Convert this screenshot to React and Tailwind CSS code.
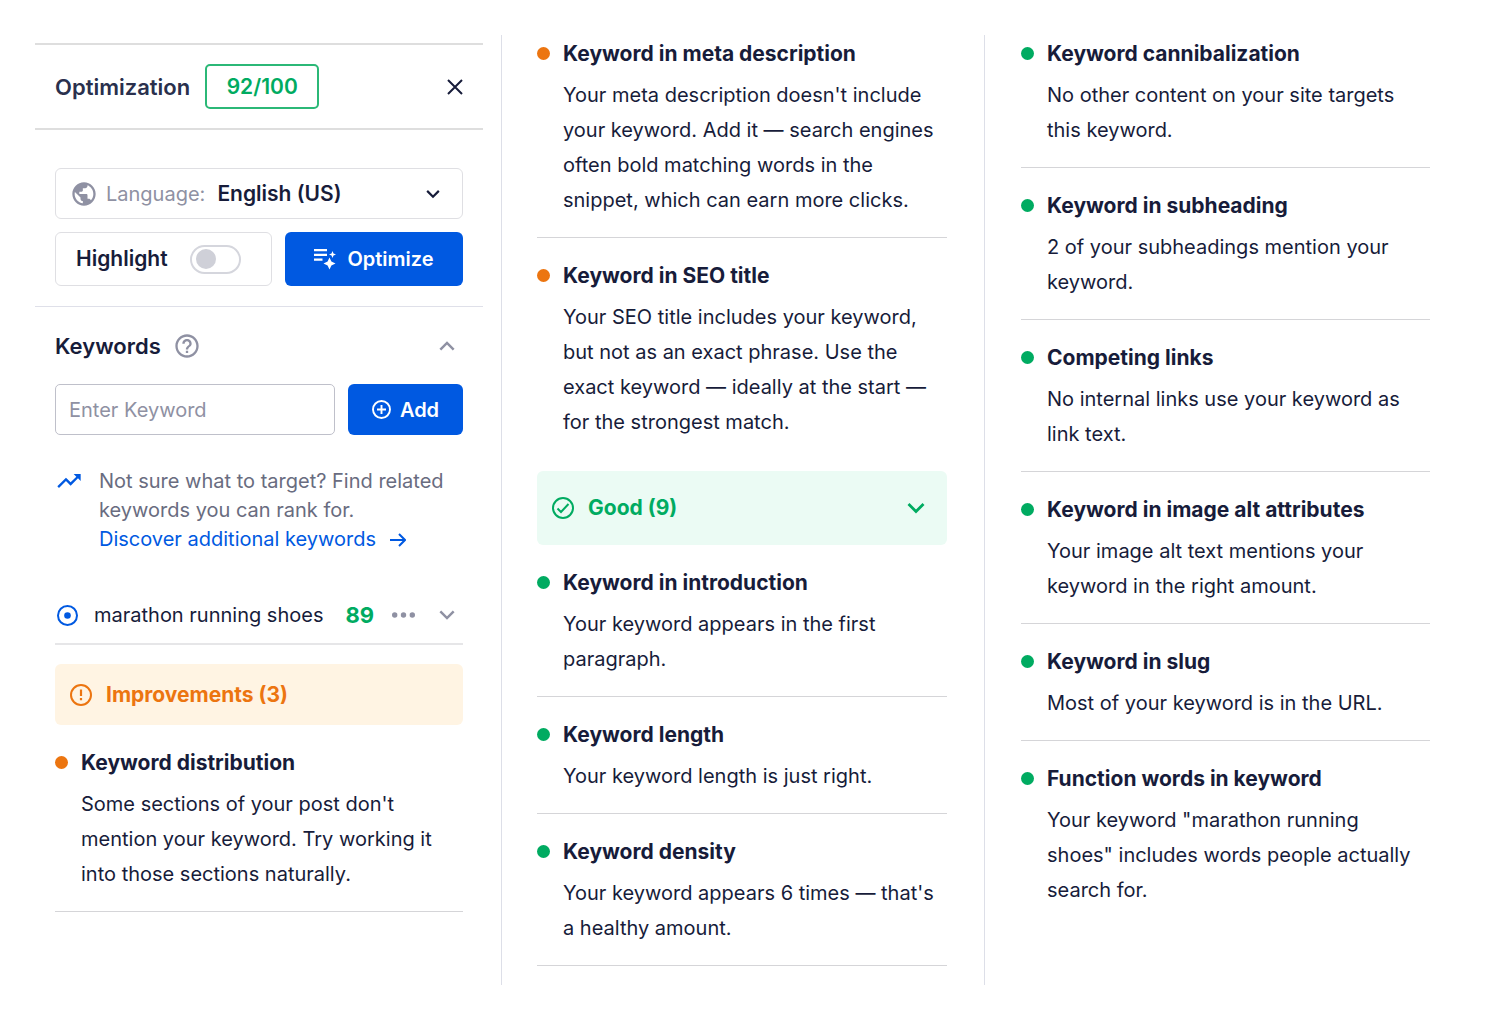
import { useState } from "react";
import { MdPublic, MdHelpOutline, MdTrendingUp } from "react-icons/md";

const improvements = [
  {
    title: "Keyword distribution",
    text: "Some sections of your post don't mention your keyword. Try working it into those sections naturally.",
  },
  {
    title: "Keyword in meta description",
    text: "Your meta description doesn't include your keyword. Add it — search engines often bold matching words in the snippet, which can earn more clicks.",
  },
  {
    title: "Keyword in SEO title",
    text: "Your SEO title includes your keyword, but not as an exact phrase. Use the exact keyword — ideally at the start — for the strongest match.",
  },
];

const good = [
  {
    title: "Keyword in introduction",
    text: "Your keyword appears in the first paragraph.",
  },
  { title: "Keyword length", text: "Your keyword length is just right." },
  {
    title: "Keyword density",
    text: "Your keyword appears 6 times — that's a healthy amount.",
  },
  {
    title: "Keyword cannibalization",
    text: "No other content on your site targets this keyword.",
  },
  {
    title: "Keyword in subheading",
    text: "2 of your subheadings mention your keyword.",
  },
  {
    title: "Competing links",
    text: "No internal links use your keyword as link text.",
  },
  {
    title: "Keyword in image alt attributes",
    text: "Your image alt text mentions your keyword in the right amount.",
  },
  { title: "Keyword in slug", text: "Most of your keyword is in the URL." },
  {
    title: "Function words in keyword",
    text: 'Your keyword "marathon running shoes" includes words people actually search for.',
  },
];

function Chevron({ up, className }) {
  return (
    <svg
      viewBox="0 0 18 18"
      fill="none"
      stroke="currentColor"
      strokeWidth="2.8"
      className={className}
      aria-hidden="true"
    >
      <path d={up ? "M1.500 13l7.500-7.500 7.500 7.500" : "M1.500 5l7.500 7.500 7.500-7.500"} />
    </svg>
  );
}

function CheckItem({ item, tone = "good", first, last }) {
  return (
    <li
      className={`flex gap-[13px] border-[#d5d5d8] ${first ? "pt-[5px]" : "pt-6"} ${
        last ? "" : "border-b pb-[19px]"
      }`}
    >
      <span
        className={`mt-[7px] h-[13px] w-[13px] shrink-0 rounded-full ${
          tone === "good" ? "bg-[#00ab61]" : "bg-[#ec7510]"
        }`}
      />
      <div>
        <h3 className="text-[21px] leading-7 font-bold">{item.title}</h3>
        <p className="mt-[10px] text-[20px] leading-[35px]">{item.text}</p>
      </div>
    </li>
  );
}

export default function App() {
  const [highlight, setHighlight] = useState(false);
  const [keyword, setKeyword] = useState("");

  return (
    <main className="min-h-screen bg-white px-[35px] py-[35px] font-['Inter',sans-serif] text-[20px] text-[#171c3a]">
      <div className="grid grid-cols-[minmax(0,466fr)_minmax(0,483fr)_minmax(0,466fr)]">
        <section className="pt-2 pr-[18px]">
          <header className="flex items-center border-y-2 border-[#dedede] px-5 py-[19px]">
            <h1 className="text-[22px] leading-7 font-semibold text-[#2a304d]">
              Optimization
            </h1>
            <span className="ml-[15px] flex h-[45px] w-[114px] items-center justify-center rounded-[5px] border-2 border-[#2bb877] text-[21px] font-semibold text-[#00ab61]">
              92/100
            </span>
            <button type="button" aria-label="Close" className="ml-auto">
              <svg
                viewBox="0 0 16 16"
                stroke="currentColor"
                strokeWidth="2"
                className="h-4 w-4"
              >
                <path d="M1 1l14 14M15 1L1 15" />
              </svg>
            </button>
          </header>

          <div className="border-b border-[#dfe0e9] px-5 pt-[38px] pb-5">
            <div className="flex h-[51px] items-center rounded-md border border-[#dfdfe3] pr-[22px] pl-[14px]">
              <MdPublic className="h-7 w-7 text-[#8f91a3]" />
              <label htmlFor="language" className="ml-2 text-[#8f91a3]">
                Language:
              </label>
              <select
                id="language"
                className="ml-3 min-w-0 flex-1 appearance-none bg-transparent text-[21px] font-semibold"
              >
                <option>English (US)</option>
              </select>
              <Chevron className="pointer-events-none h-[14px] w-[14px]" />
            </div>
            <div className="mt-[13px] flex gap-[13px]">
              <label className="flex h-[54px] flex-1 items-center rounded-md border border-[#dfdfe3] pl-5 text-[21px] font-semibold">
                Highlight
                <input
                  type="checkbox"
                  role="switch"
                  checked={highlight}
                  onChange={(e) => setHighlight(e.target.checked)}
                  className="peer sr-only"
                />
                <span className="ml-[22px] flex h-[29px] w-[51px] items-center rounded-full border-2 border-[#d5d6dd] px-1 peer-checked:justify-end">
                  <span className="h-5 w-5 rounded-full bg-[#cfd0d8]" />
                </span>
              </label>
              <button
                type="button"
                className="flex h-[54px] w-[178px] items-center justify-center gap-[11px] rounded-md bg-[#0059e1] font-semibold text-white"
              >
                <svg viewBox="0 0 22 22" fill="currentColor" className="h-[22px] w-[22px]">
                  <path d="M0 1h13v2.200H0zM0 5.800h13v2.200H0zM0 10.600h8.500v2.200H0z" />
                  <path d="M18.500 3l1 2.500 2.500 1-2.500 1-1 2.500-1-2.500-2.500-1 2.500-1z" />
                  <path d="M15.500 9.500l1.900 4.100 4.100 1.900-4.100 1.900-1.900 4.100-1.900-4.100-4.100-1.900 4.100-1.900z" />
                </svg>
                Optimize
              </button>
            </div>
          </div>

          <div className="px-5">
            <div className="flex items-center pt-[23px] pr-2">
              <h2 className="text-[22px] leading-8 font-semibold">Keywords</h2>
              <MdHelpOutline className="ml-3 h-7 w-7 text-[#8f91a3]" />
              <button
                type="button"
                aria-label="Collapse keywords"
                className="ml-auto text-[#8f91a3]"
              >
                <Chevron up className="h-4 w-4" />
              </button>
            </div>
            <form
              className="mt-[22px] flex gap-[13px]"
              onSubmit={(e) => e.preventDefault()}
            >
              <input
                type="text"
                aria-label="Enter Keyword"
                placeholder="Enter Keyword"
                value={keyword}
                onChange={(e) => setKeyword(e.target.value)}
                className="h-[51px] min-w-0 flex-1 rounded-[5px] border border-[#bfc0ca] px-[13px] pt-px placeholder:text-[#8f91a3]"
              />
              <button
                type="submit"
                className="flex h-[51px] w-[115px] items-center justify-center gap-[9px] rounded-md bg-[#0059e1] font-semibold text-white"
              >
                <svg
                  viewBox="0 0 19 19"
                  fill="none"
                  stroke="currentColor"
                  strokeWidth="1.900"
                  className="h-[19px] w-[19px]"
                >
                  <circle cx="9.500" cy="9.500" r="8.500" />
                  <path d="M9.500 5v9M5 9.500h9" />
                </svg>
                Add
              </button>
            </form>

            <div className="mt-8 flex gap-4">
              <MdTrendingUp className="h-7 w-7 shrink-0 text-[#0059e1]" />
              <p className="leading-[29px] text-[#696c80]">
                Not sure what to target? Find related keywords you can rank for.
                <br />
                <a href="#discover" className="inline-flex items-center gap-[14px] text-[#0059e1]">
                  Discover additional keywords
                  <svg
                    viewBox="0 0 16 14"
                    fill="none"
                    stroke="currentColor"
                    strokeWidth="2"
                    className="h-[14px] w-4"
                  >
                    <path d="M0 7h15M9 1l6 6-6 6" />
                  </svg>
                </a>
              </p>
            </div>

            <div className="mt-[33px] flex items-center border-b-2 border-[#e6e6e8] pt-[14px] pr-2 pb-[14px] pl-[2px]">
              <svg viewBox="0 0 21 21" className="h-[21px] w-[21px] text-[#0059e1]">
                <circle
                  cx="10.500"
                  cy="10.500"
                  r="9.500"
                  fill="none"
                  stroke="currentColor"
                  strokeWidth="2"
                />
                <circle cx="10.500" cy="10.500" r="3.300" fill="currentColor" />
              </svg>
              <span className="ml-4 leading-7">marathon running shoes</span>
              <span className="ml-[22px] text-[22px] leading-7 font-bold text-[#00ab61]">
                89
              </span>
              <button type="button" aria-label="More" className="ml-[18px] text-[#8f91a3]">
                <svg viewBox="0 0 23 6" fill="currentColor" className="h-[6px] w-[23px]">
                  <circle cx="2.700" cy="3" r="2.700" />
                  <circle cx="11.500" cy="3" r="2.700" />
                  <circle cx="20.300" cy="3" r="2.700" />
                </svg>
              </button>
              <button
                type="button"
                aria-label="Expand keyword"
                className="ml-auto text-[#8f91a3]"
              >
                <Chevron className="h-4 w-4" />
              </button>
            </div>

            <h2 className="mt-[19px] flex h-[61px] items-center gap-[14px] rounded-md bg-[#fff4e3] pl-[15px] text-[21px] font-bold text-[#ec7510]">
              <svg viewBox="0 0 22 22" className="h-[22px] w-[22px]">
                <circle
                  cx="11"
                  cy="11"
                  r="10"
                  fill="none"
                  stroke="currentColor"
                  strokeWidth="2"
                />
                <path d="M9.900 5.500h2.200v6.500h-2.200zM9.900 14h2.200v2.200h-2.200z" fill="currentColor" />
              </svg>
              Improvements (3)
            </h2>
            <ul>
              <CheckItem item={improvements[0]} tone="warn" />
            </ul>
          </div>
        </section>

        <section className="border-l border-[#dddfe8] pr-[37px] pb-[19px] pl-[35px]">
          <ul>
            <CheckItem item={improvements[1]} tone="warn" first />
            <CheckItem item={improvements[2]} tone="warn" last />
          </ul>
          <h2 className="mt-[31px]">
            <button
              type="button"
              className="flex h-[74px] w-full items-center gap-[14px] rounded-md bg-[#ebfbf4] pr-[22px] pl-[15px] text-[21px] font-bold text-[#00ab61]"
            >
              <svg
                viewBox="0 0 22 22"
                fill="none"
                stroke="currentColor"
                strokeWidth="2"
                className="h-[22px] w-[22px]"
              >
                <circle cx="11" cy="11" r="10" />
                <path d="M5.500 11.500l3.500 3.500 7.500-8" />
              </svg>
              Good (9)
              <Chevron className="ml-auto h-[18px] w-[18px]" />
            </button>
          </h2>
          <ul>
            {good.slice(0, 3).map((item) => (
              <CheckItem key={item.title} item={item} />
            ))}
          </ul>
        </section>

        <section className="border-l border-[#dddfe8] pr-5 pl-9">
          <ul>
            {good.slice(3).map((item, i) => (
              <CheckItem
                key={item.title}
                item={item}
                first={i === 0}
                last={i === 5}
              />
            ))}
          </ul>
        </section>
      </div>
    </main>
  );
}
